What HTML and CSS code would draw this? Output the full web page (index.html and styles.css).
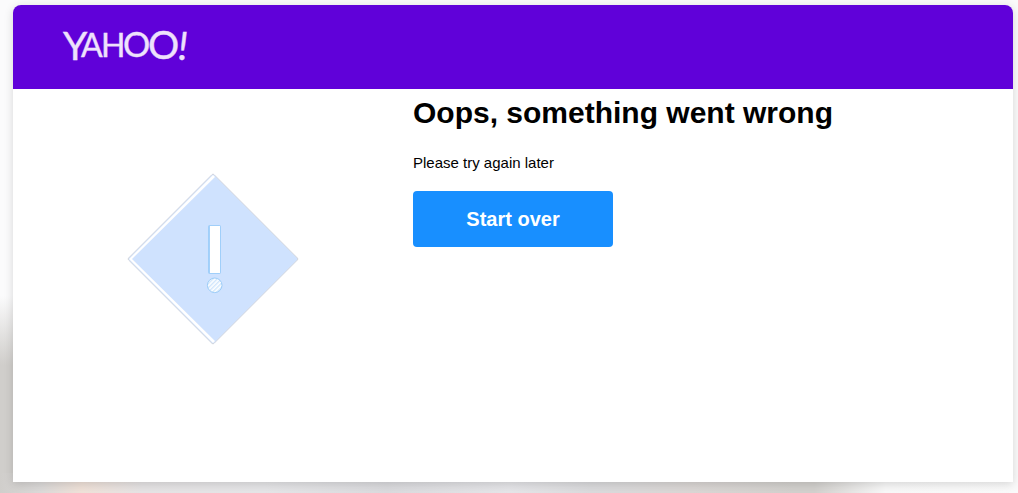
FILE: index.html
```
<!DOCTYPE html>
<html lang="en">
<head>
    <meta charset="utf-8">
    <title>Yahoo</title>
    <link rel="stylesheet" href="styles.css">
</head>
<body>
    <div class="card">
        <header class="header">
            <svg class="logo" viewBox="0 0 128 36" role="img" aria-label="Yahoo!">
                <text><tspan class="logo-y" x="0" y="32">Y</tspan><tspan class="logo-ah" x="18" y="29">A</tspan><tspan class="logo-ah" x="38" y="29">H</tspan><tspan class="logo-o" x="60" y="29">O</tspan><tspan class="logo-big-o" x="85" y="31">O</tspan><tspan class="logo-mark" x="115" y="32">!</tspan></text>
            </svg>
        </header>

        <main class="content">
            <div class="picture">
                <svg class="warning" viewBox="0 0 172 172" aria-hidden="true">
                    <defs>
                        <pattern id="hatch" width="3" height="3" patternUnits="userSpaceOnUse" patternTransform="rotate(45)">
                            <rect width="3" height="3" fill="#fff"/>
                            <rect width="1.4" height="3" fill="#cfe5fc"/>
                        </pattern>
                    </defs>
                    <path d="M85 1.6Q86 .6 87 1.6L170.400 85Q171.400 86 170.400 87L87 170.400Q86 171.400 85 170.400L1.600 87Q.6 86 1.600 85Z" fill="#cfe2fe" stroke="#d3d6dd"/>
                    <path d="M86 2L2 86L86 170L88 168L5 86L88 4Z" fill="#fff"/>
                    <rect x="81.500" y="52.500" width="12" height="48" rx="1" fill="#a5d1fa" stroke="#a0cffa"/>
                    <rect x="83" y="53" width="10" height="47" fill="#fff"/>
                    <circle cx="87.700" cy="112.300" r="7.300" fill="url(#hatch)" stroke="#9dcdf8"/>
                </svg>
            </div>
            <div class="message">
                <h1>Oops, something went wrong</h1>
                <p>Please try again later</p>
                <button class="start" type="button">Start over</button>
            </div>
        </main>
    </div>
</body>
</html>
```
FILE: styles.css
```
* {
    box-sizing: border-box;
}
body {
    display: flex;
    min-height: 100vh;
    margin: 0;
    padding: 5px 5px 11px 13px;
    font-family: "Liberation Sans", Arial, sans-serif;
    color: #000;
    background:
        linear-gradient(to right, #d0cecb 0%, #dbd9d8 4%, #efe1d8 8%, #e5e3e4 14%, #e5e5e7 26%, #dadadd 38%, #e5e5e8 50%, #dadadc 58%, #dad6d4 68%, #d2d0cd 78%, #d2d0cd 80%, #f8f8f8 87%, #fafafa 100%) bottom / 100% 20px no-repeat,
        linear-gradient(to bottom, #fbfbfc 0%, #fbfbfc 60%, #d0cecb 74%, #d0cecb 100%) left / 20px 100% no-repeat,
        #fafafa;
}
.card {
    flex: 1;
    max-width: 1000px;
    background-color: #fff;
    border-radius: 8px 8px 0 0;
    box-shadow: 0 2px 10px rgba(0, 0, 0, 0.15);
}
.header {
    height: 84px;
    padding: 23px 50px;
    background-color: #6001d9;
    border-radius: 8px 8px 0 0;
}
.logo {
    display: block;
    width: 128px;
    height: 36px;
    fill: #eee2fc;
    stroke: #eee2fc;
    stroke-width: 0.4;
    font-family: Lato, sans-serif;
    overflow: visible;
}
.logo-y {
    font-size: 39px;
}
.logo-ah {
    font-size: 32px;
}
.logo-o {
    font-size: 34px;
}
.logo-big-o {
    font-size: 39px;
}
.logo-mark {
    font-size: 39px;
    font-style: italic;
}
.content {
    display: flex;
}
.picture {
    flex: 0 0 40%;
    padding-top: 84px;
}
.warning {
    display: block;
    width: 172px;
    height: 172px;
    margin: 0 auto;
}
.message {
    flex: 1;
    padding-top: 6px;
}
h1 {
    margin: 0;
    font-size: 30px;
    line-height: 36px;
}
p {
    margin: 22px 0 18px;
    font-size: 15px;
    line-height: 20px;
}
.start {
    width: 200px;
    height: 56px;
    border: 0;
    border-radius: 4px;
    background-color: #188fff;
    color: #fff;
    font-family: inherit;
    font-size: 20px;
    font-weight: bold;
    cursor: pointer;
}
```
